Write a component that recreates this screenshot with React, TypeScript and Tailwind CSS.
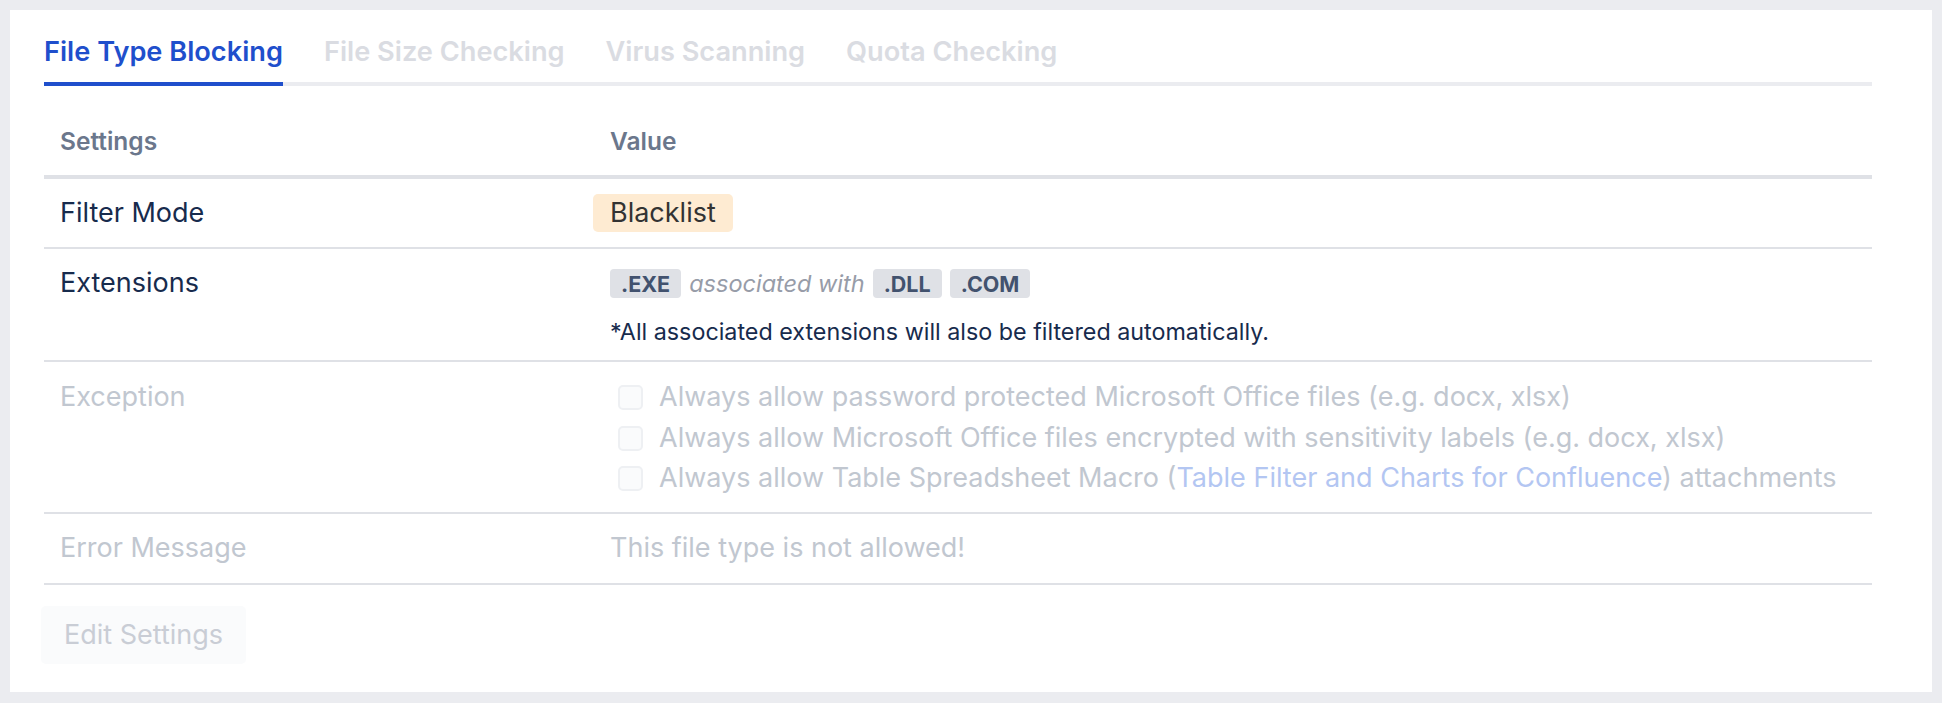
const tabs = ["File Type Blocking", "File Size Checking", "Virus Scanning", "Quota Checking"];

const exceptions = [
  <>Always allow password protected Microsoft Office files (e.g. docx, xlsx)</>,
  <>Always allow Microsoft Office files encrypted with sensitivity labels (e.g. docx, xlsx)</>,
  <>
    Always allow Table Spreadsheet Macro (<span className="text-[#b3c6f2]">Table Filter and Charts for Confluence</span>) attachments
  </>,
];

const Ext = ({ label }: { label: string }) => (
  <span className="inline-flex h-[29px] items-center rounded-[4px] bg-[#dfe1e6] px-[11px] text-[21.5px] font-bold text-[#42526e]">
    {label}
  </span>
);

export default function App() {
  return (
    <div className="min-h-[703px] bg-[#ebecf0] p-[10px] font-['Inter','Liberation_Sans',sans-serif]">
      <div className="bg-white pl-[34px] pr-[60px] pt-[26px] pb-[28px]">
        {/* Tabs */}
        <div className="flex gap-[41px] border-b-4 border-[#ebecf0]">
          {tabs.map((t, i) => (
            <div
              key={t}
              className={`-mb-[4px] border-b-4 pb-[14px] text-[27.2px] leading-[32px] font-semibold ${
                i === 0 ? "border-[#1f4fcc] text-[#1f4fcc]" : "border-transparent text-[#dadce2]"
              }`}
            >
              {t}
            </div>
          ))}
        </div>

        {/* Table */}
        <div className="mt-[22px]">
          <div className="grid h-[71px] grid-cols-[550px_1fr] items-center border-b-4 border-[#dfe1e6] text-[24.5px] font-semibold text-[#6b778c]">
            <div className="pl-[16px]">Settings</div>
            <div className="pl-[16px]">Value</div>
          </div>

          <div className="grid h-[70px] grid-cols-[550px_1fr] items-center border-b-2 border-[#dfe1e6] text-[27px] text-[#172b4d]">
            <div className="pl-[16px]">Filter Mode</div>
            <div className="-ml-[1px]">
              <span className="inline-flex h-[38px] items-center rounded-[5px] bg-[#feebd2] px-[17px] text-[#333333]">
                Blacklist
              </span>
            </div>
          </div>

          <div className="grid grid-cols-[550px_1fr] border-b-2 border-[#dfe1e6] pb-[13px] text-[#172b4d]">
            <div className="pl-[16px] pt-[20px] text-[27px] leading-[28px]">Extensions</div>
            <div className="pl-[16px] pt-[17px]">
              <div className="flex items-center gap-[8px]">
                <Ext label=".EXE" />
                <span className="text-[23.5px] italic text-[#979ca8]">associated with</span>
                <Ext label=".DLL" />
                <Ext label=".COM" />
              </div>
              <div className="mt-[16px] text-[23.3px] leading-[30px]">
                *All associated extensions will also be filtered automatically.
              </div>
            </div>
          </div>

          <div className="grid grid-cols-[550px_1fr] border-b-2 border-[#dfe1e6] pt-[15px] pb-[13px] text-[27px] text-[#c1c7d0]">
            <div className="pl-[16px] leading-[40px]">Exception</div>
            <div className="pl-[24px]">
              {exceptions.map((e, i) => (
                <div key={i} className="flex h-[40.5px] items-center gap-[16px]">
                  <span className="h-[25px] w-[25px] shrink-0 rounded-[5px] border-2 border-[#eef0f3] bg-[#fafbfc]" />
                  <span>{e}</span>
                </div>
              ))}
            </div>
          </div>

          <div className="grid h-[71px] grid-cols-[550px_1fr] items-center border-b-2 border-[#dfe1e6] text-[27px] text-[#c1c7d0]">
            <div className="pl-[16px]">Error Message</div>
            <div className="pl-[16px]">This file type is not allowed!</div>
          </div>
        </div>

        <button className="-ml-[3px] mt-[21px] h-[58px] rounded-[5px] bg-[#fafbfc] px-[23px] text-[27px] text-[#c9cdd5]" disabled>
          Edit Settings
        </button>
      </div>
    </div>
  );
}
